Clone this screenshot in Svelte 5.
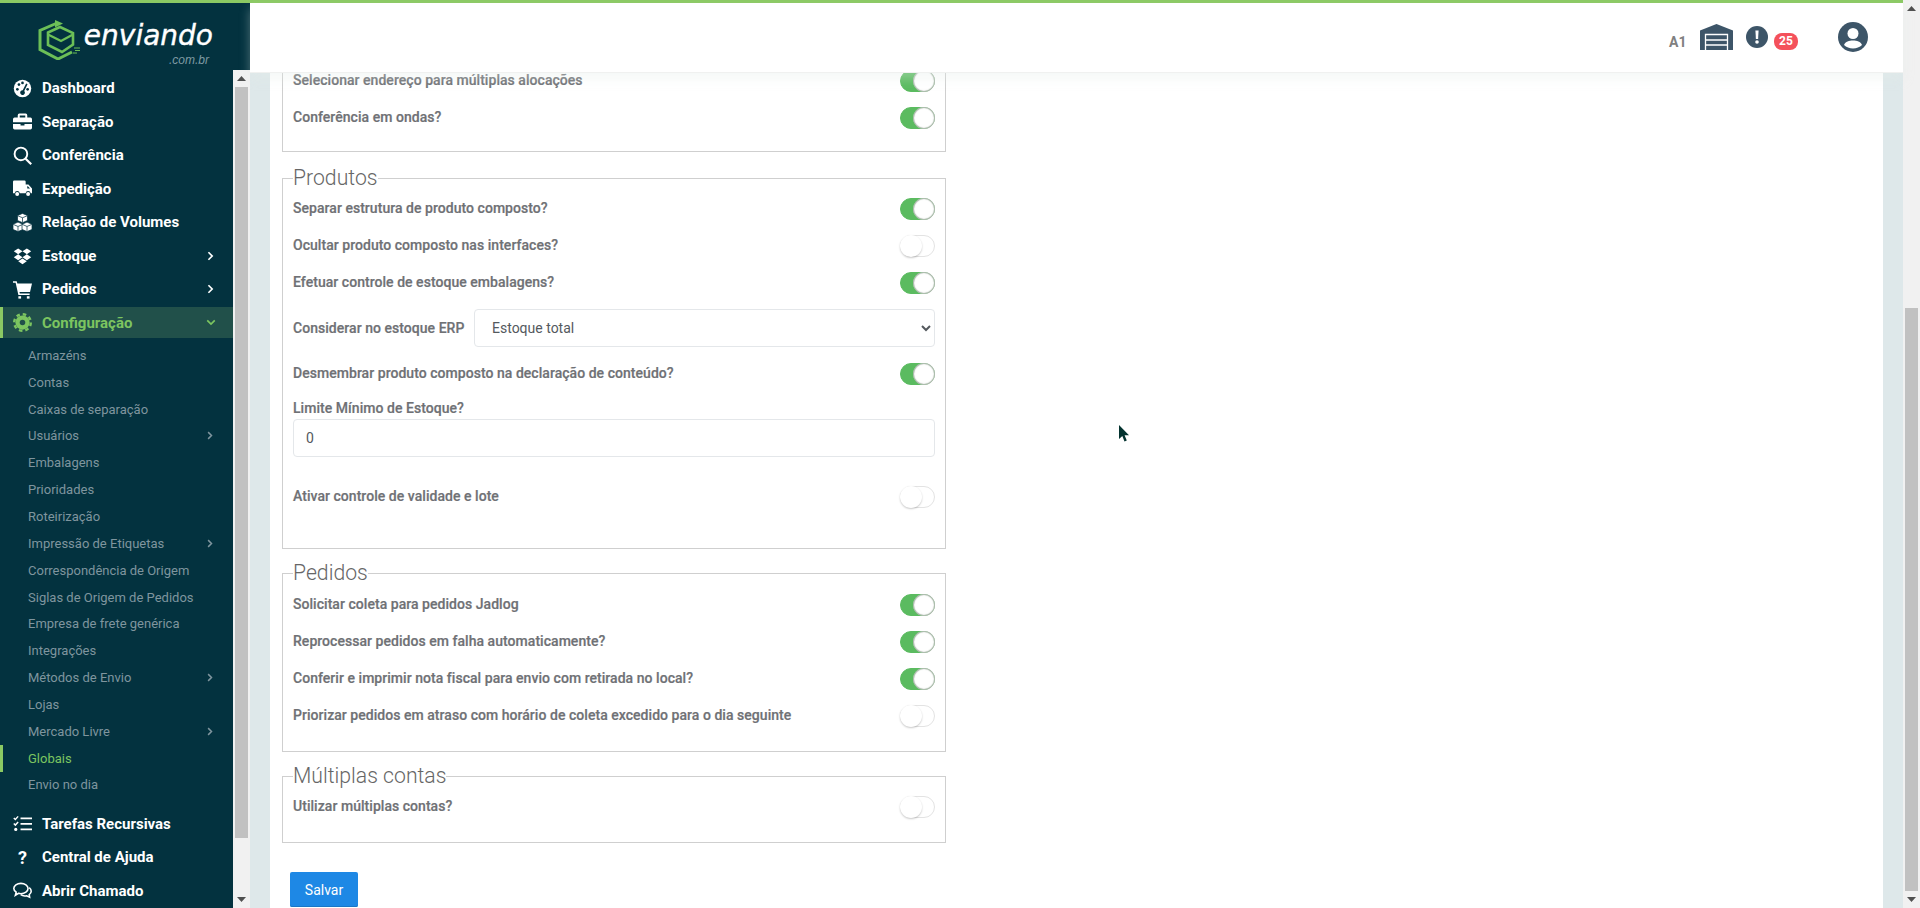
<script>
  const top1 = [
    { label: 'Dashboard', icon: 'gauge' },
    { label: 'Separação', icon: 'case' },
    { label: 'Conferência', icon: 'search' },
    { label: 'Expedição', icon: 'truck' },
    { label: 'Relação de Volumes', icon: 'cubes' },
    { label: 'Estoque', icon: 'dropbox', arrow: true },
    { label: 'Pedidos', icon: 'cart', arrow: true },
    { label: 'Configuração', icon: 'cog', open: true }
  ];
  const subs = [
    { label: 'Armazéns' }, { label: 'Contas' }, { label: 'Caixas de separação' },
    { label: 'Usuários', arrow: true }, { label: 'Embalagens' }, { label: 'Prioridades' },
    { label: 'Roteirização' }, { label: 'Impressão de Etiquetas', arrow: true },
    { label: 'Correspondência de Origem' }, { label: 'Siglas de Origem de Pedidos' },
    { label: 'Empresa de frete genérica' }, { label: 'Integrações' },
    { label: 'Métodos de Envio', arrow: true }, { label: 'Lojas' },
    { label: 'Mercado Livre', arrow: true }, { label: 'Globais', current: true }, { label: 'Envio no dia' }
  ];
  const top2 = [
    { label: 'Tarefas Recursivas', icon: 'tasks' },
    { label: 'Central de Ajuda', icon: 'help' },
    { label: 'Abrir Chamado', icon: 'chat' }
  ];
  const pedidos = [
    ['Solicitar coleta para pedidos Jadlog', true],
    ['Reprocessar pedidos em falha automaticamente?', true],
    ['Conferir e imprimir nota fiscal para envio com retirada no local?', true],
    ['Priorizar pedidos em atraso com horário de coleta excedido para o dia seguinte', false]
  ];
</script>

{#snippet icon(name)}
  <svg class="ico" viewBox="0 0 24 24" aria-hidden="true">
    {#if name === 'gauge'}
      <circle cx="12" cy="12" r="11" fill="currentColor" />
      <g fill="#03323f"><circle cx="5.500" cy="13" r="1.700" /><circle cx="7.500" cy="7" r="1.700" /><circle cx="12" cy="5" r="1.700" /><circle cx="18.500" cy="13" r="1.700" /><path d="M16.600 5.800l1.800.9-4.200 8.400a3 3 0 1 1-1.900-.9z" /></g>
    {:else if name === 'case'}
      <path fill="currentColor" d="M8 2h8a2 2 0 0 1 2 2v3h4a2 2 0 0 1 2 2v4H0V9a2 2 0 0 1 2-2h4V4a2 2 0 0 1 2-2zm.5 2.300V7h7V4.300zM0 15h9.500v2h5v-2H24v5a2 2 0 0 1-2 2H2a2 2 0 0 1-2-2z" />
    {:else if name === 'search'}
      <circle cx="10" cy="10" r="8" fill="none" stroke="currentColor" stroke-width="2.400" /><path d="M16 16l7 7" stroke="currentColor" stroke-width="2.800" />
    {:else if name === 'truck'}
      <path fill="currentColor" d="M1.500 2h13A1.500 1.500 0 0 1 16 3.500V7h3.500L24 12v6h-1.600a3.300 3.300 0 0 0-6.500 0H8.600a3.300 3.300 0 0 0-6.500 0H0V3.500A1.500 1.500 0 0 1 1.500 2zM18 9v3h3.500l-2.700-3z" />
      <circle cx="5.300" cy="19" r="2.500" fill="currentColor" /><circle cx="19.100" cy="19" r="2.500" fill="currentColor" />
    {:else if name === 'cubes'}
      <g fill="currentColor" stroke="#03323f" stroke-width=".9"><path d="M12 .5l6.300 2.700v6.300L12 12.200 5.700 9.500V3.200z" /><path d="M6.300 11.500l6.300 2.700v6.600L6.300 23.500 0 20.800v-6.600z" /><path d="M17.700 11.500L24 14.200v6.600l-6.300 2.700-6.300-2.700v-6.600z" /></g>
      <g fill="none" stroke="#03323f" stroke-width=".9"><path d="M6 3.500l6 2.500 6-2.500M12 6v6" /><path d="M.5 14.500l5.800 2.500 5.800-2.500M6.300 17v6" /><path d="M12 14.500l5.700 2.500 5.800-2.500M17.700 17v6" /></g>
    {:else if name === 'dropbox'}
      <path fill="currentColor" d="M6.500 3L12 6.700 6.500 10.500 1 6.700zM17.500 3L23 6.700l-5.500 3.800L12 6.700zM1 14.200l5.500-3.700L12 14.200 6.500 18zM23 14.200L17.500 18 12 14.200l5.500-3.700zM6.600 19.300L12 15.700l5.400 3.600-5.400 3.700z" />
    {:else if name === 'cart'}
      <path fill="currentColor" d="M0 1.500h4.700l.8 3H24l-2.500 10.500H8.200l.4 2H21v2H6.800L3.300 3.500H0z" /><rect x="6.800" y="20.500" width="3.400" height="3" fill="currentColor" /><rect x="17.500" y="20.500" width="3.400" height="3" fill="currentColor" />
    {:else if name === 'cog'}
      <circle cx="12" cy="12" r="9" fill="currentColor" /><circle cx="12" cy="12" r="10.500" fill="none" stroke="currentColor" stroke-width="3" stroke-dasharray="4.500 3.746" /><circle cx="12" cy="12" r="3.500" fill="#21504a" />
    {:else if name === 'tasks'}
      <g stroke="currentColor" fill="none" stroke-width="2.200"><path d="M9.500 5.500H24M9.500 12.500H24M9.500 19.500H24" /><path d="M1 5l2 2 3.500-4M1 12l2 2 3.500-4" stroke-width="1.800" /></g><circle cx="3.500" cy="19.500" r="2" fill="currentColor" />
    {:else if name === 'chat'}
      <g fill="none" stroke="currentColor" stroke-width="2"><path d="M10 3c5 0 9 3 9 6.500S15 16 10 16c-1 0-2-.1-3-.4L3 18l1-4C2.200 12.800 1 11.200 1 9.500 1 6 5 3 10 3z" /><path d="M20.500 8.500c1.600 1.200 2.500 2.800 2.500 4.500 0 1.700-1 3.200-2.500 4.200l.5 3.300-3.800-1.800c-2.800.6-5.500 0-7.400-1.400" /></g>
    {/if}
  </svg>
{/snippet}

{#snippet chev()}
  <svg class="chev" viewBox="0 0 8 12" aria-hidden="true"><path d="M1.500 1.500L6 6l-4.500 4.500" fill="none" stroke="currentColor" stroke-width="2" /></svg>
{/snippet}

{#snippet vbar(cls)}
  <div class="vbar {cls}">
    <svg class="arrow" viewBox="0 0 9 5" aria-hidden="true"><path d="M0 5L4.500 0 9 5z" /></svg>
    <div class="vtrack"><div class="thumb"></div></div>
    <svg class="arrow" viewBox="0 0 9 5" aria-hidden="true"><path d="M0 0L4.500 5 9 0z" /></svg>
  </div>
{/snippet}

{#snippet toggle(on)}
  <span class="sw" class:on><span class="knob"></span></span>
{/snippet}

{#snippet row(text, on)}
  <div class="row"><label>{text}</label>{@render toggle(on)}</div>
{/snippet}

<div class="root">
  <div class="main">
    <div class="accent"></div>
    <div class="shell">
      <aside class="side">
        <div class="brand">
          <svg class="mark" viewBox="0 0 42 40" aria-hidden="true">
            <g fill="none" stroke="#6cbf57">
              <path d="M18 3.500L2 10.500v19L20 39l14-7" stroke-width="3" />
              <path d="M10 12.500L22 7l13 6v11.500L24 32 10 25z" stroke-width="2.600" />
              <path d="M10 14.500l13 6.500 12-6.500" stroke-width="2.400" />
              <path d="M36 28h6M37 30.500h5M35 33h4" stroke-width="1" />
            </g>
            <path d="M17 0l8 3.500-8 4z" fill="#6cbf57" />
          </svg>
          <div class="brandtext"><span class="bn">enviando</span><span class="bc">.com.br</span></div>
        </div>
        <div class="navwrap">
          <nav class="nav">
            {#each top1 as it}
              <div class="top" class:open={it.open}>
                <span class="tic">{@render icon(it.icon)}</span>
                <span class="tl">{it.label}</span>
                {#if it.arrow}{@render chev()}{/if}
                {#if it.open}<svg class="chev down" viewBox="0 0 12 8" aria-hidden="true"><path d="M1.500 1.500L6 6l4.500-4.500" fill="none" stroke="currentColor" stroke-width="2" /></svg>{/if}
              </div>
            {/each}
            <div class="sublist">
              {#each subs as s}
                <div class="sub" class:current={s.current}>
                  <span>{s.label}</span>
                  {#if s.arrow}{@render chev()}{/if}
                </div>
              {/each}
            </div>
            {#each top2 as it}
              <div class="top">
                <span class="tic">
                  {#if it.icon === 'help'}<span class="q">?</span>{:else}{@render icon(it.icon)}{/if}
                </span>
                <span class="tl">{it.label}</span>
              </div>
            {/each}
          </nav>
          {@render vbar('sidebar')}
        </div>
      </aside>

      <div class="content">
        <header class="head">
          <span class="a1">A1</span>
          <svg class="wh" viewBox="0 0 33 26" aria-hidden="true">
            <path fill="#3d5568" d="M16.500 0L33 6.500V26H0V6.500z" />
            <g fill="none" stroke="#fff" stroke-width="1.300"><path d="M5.500 27V10.500h22V27" /><path d="M5.500 16h22M5.500 21h22" /></g>
          </svg>
          <svg class="alert" viewBox="0 0 22 22" aria-hidden="true">
            <circle cx="11" cy="11" r="11" fill="#3d5568" />
            <path fill="#fff" d="M9.400 4.500h3.200l-.5 8.500h-2.200z" /><circle cx="11" cy="16" r="1.800" fill="#fff" />
          </svg>
          <span class="badge">25</span>
          <svg class="user" viewBox="0 0 30 30" aria-hidden="true">
            <circle cx="15" cy="15" r="15" fill="#3d5568" />
            <circle cx="15" cy="11.500" r="5.500" fill="#fff" />
            <path fill="#fff" d="M6 23c1.500-3.500 5-4.500 9-4.500s7.500 1 9 4.500c-2.300 2.300-5.500 3.500-9 3.500S8.300 25.300 6 23z" />
          </svg>
        </header>

        <div class="stage">
          <main class="card">
            <fieldset class="fs clipped">
              {@render row('Selecionar endereço para múltiplas alocações', true)}
              {@render row('Conferência em ondas?', true)}
            </fieldset>

            <fieldset class="fs produtos">
              <legend>Produtos</legend>
              {@render row('Separar estrutura de produto composto?', true)}
              {@render row('Ocultar produto composto nas interfaces?', false)}
              {@render row('Efetuar controle de estoque embalagens?', true)}
              <div class="selrow">
                <label>Considerar no estoque ERP</label>
                <select class="ctl"><option>Estoque total</option></select>
              </div>
              {@render row('Desmembrar produto composto na declaração de conteúdo?', true)}
              <div class="field">
                <label>Limite Mínimo de Estoque?</label>
                <input class="ctl" value="0" />
              </div>
              {@render row('Ativar controle de validade e lote', false)}
            </fieldset>

            <fieldset class="fs pedidos">
              <legend>Pedidos</legend>
              {#each pedidos as p}{@render row(p[0], p[1])}{/each}
            </fieldset>

            <fieldset class="fs multi">
              <legend>Múltiplas contas</legend>
              {@render row('Utilizar múltiplas contas?', false)}
            </fieldset>

            <button class="save">Salvar</button>
          </main>
        </div>
      </div>
    </div>
  </div>
  {@render vbar('page')}
  <svg class="cursor" viewBox="0 0 11 17" aria-hidden="true"><path d="M0 0v14l3.300-3 2.200 5.500 2.300-1-2.200-5.200H10z" fill="#04332f" /></svg>
</div>

<style>
  :global(body) { margin: 0; font-family: Roboto, "Liberation Sans", sans-serif; overflow: hidden; }
  .root { position: relative; display: flex; width: 1920px; height: 908px; overflow: hidden; background: #fff; }
  .main { flex: 1; min-width: 0; display: flex; flex-direction: column; }
  .accent { height: 3px; background: #8bc963; flex: none; }
  .shell { flex: 1; min-height: 0; display: flex; }

  .side { width: 250px; flex: none; display: flex; flex-direction: column; background: #03323f; }
  .brand { height: 67px; flex: none; display: flex; padding: 17px 0 0 38px; box-sizing: border-box; gap: 3px; }
  .mark { width: 42px; height: 40px; flex: none; }
  .brandtext { display: flex; flex-direction: column; align-items: flex-end; width: 130px; }
  .bn { font: oblique 400 28px/30px "DejaVu Sans", sans-serif; color: #fff; margin-top: 1px; -webkit-text-stroke: .4px #fff; }
  .bc { font: italic 400 12px/12px "Liberation Sans", sans-serif; color: #7f9aa3; margin: 3px 4px 0 0; }
  .navwrap { flex: 1; min-height: 0; display: flex; }
  .nav { flex: 1; min-width: 0; padding-top: 2.500px; overflow: hidden; }

  .top { position: relative; display: flex; align-items: center; height: 31px; margin-bottom: 2.500px; color: #fff; font-size: 15px; font-weight: 700; }
  .top.open { background: #21504a; color: #7cc560; box-shadow: inset 3px 0 0 #8bc963; }
  .tic { width: 42px; flex: none; display: flex; justify-content: center; padding-left: 3px; box-sizing: border-box; }
  .ico { width: 19px; height: 19px; display: block; }
  .q { font-size: 18px; font-weight: 700; line-height: 19px; }
  .tl { flex: 1; }
  .chev { width: 7px; height: 10px; margin-right: 19px; flex: none; }
  .down { width: 10px; height: 7px; margin-right: 17px; }

  .sublist { margin-top: 4px; margin-bottom: 10px; }
  .sub { display: flex; align-items: center; justify-content: space-between; height: 26.850px; padding-left: 28px; color: #7f959e; font-size: 13px; }
  .sub .chev { width: 6px; height: 9px; margin-right: 20px; }
  .sub.current { color: #7cc560; box-shadow: inset 3px 0 0 #8bc963; }

  .vbar { width: 17px; flex: none; background: #f1f1f1; display: flex; flex-direction: column; align-items: center; }
  .arrow { width: 9px; height: 5px; margin: 6px 0; flex: none; fill: #505050; }
  .vtrack { flex: 1; min-height: 0; width: 100%; display: flex; flex-direction: column; }
  .thumb { margin: 0 2px; background: #c1c1c1; }
  .sidebar .vtrack { justify-content: flex-start; }
  .sidebar .thumb { height: 751px; }
  .page .vtrack { justify-content: flex-end; }
  .page .thumb { height: 583px; }

  .content { flex: 1; min-width: 0; display: flex; flex-direction: column; }
  .head { height: 70px; flex: none; background: #fff; border-bottom: 1px solid #f0f1f0; box-sizing: border-box; display: flex; align-items: flex-start; z-index: 1; padding-left: 1419px; box-shadow: 0 6px 10px rgba(225, 235, 232, .35); }
  .a1 { font-size: 14px; font-weight: 700; color: #808080; margin-top: 31px; width: 31px; }
  .wh { width: 33px; height: 26px; margin-top: 21px; flex: none; }
  .alert { width: 22px; height: 22px; margin: 23px 0 0 13px; flex: none; }
  .badge { width: 24px; height: 17px; margin: 30px 0 0 6px; border-radius: 8px; background: #f4515b; color: #fff; font-size: 12px; font-weight: 700; line-height: 17px; text-align: center; flex: none; }
  .user { width: 30px; height: 30px; margin: 19px 0 0 40px; flex: none; }

  .stage { flex: 1; min-height: 0; background: #dee8ea; padding: 0 20px; overflow: hidden; }
  .card { background: #fff; height: 100%; padding: 0 0 0 12px; box-sizing: border-box; overflow: hidden; }

  .fs { width: 664px; box-sizing: border-box; margin: 0 0 12px; padding: 0 10px; border: 1px solid #cfcfcf; min-width: 0; }
  legend { padding: 0; font-size: 21.200px; line-height: 23px; font-weight: 300; color: #666; }
  .clipped { border-top: 0; margin-top: -12px; margin-bottom: 15px; padding-bottom: 16px; }
  .produtos { padding-bottom: 34px; }
  .produtos legend { line-height: 22px; }
  .pedidos { padding-bottom: 18px; margin-bottom: 13px; }
  .pedidos legend { line-height: 24px; }
  .multi { padding-bottom: 18px; margin-bottom: 29px; }
  .multi legend { line-height: 22px; }

  .row { display: flex; align-items: center; justify-content: space-between; height: 37px; }
  label { font-size: 14px; font-weight: 500; color: #6f7175; -webkit-text-stroke: .2px #6f7175; letter-spacing: .04px; }
  .sw { position: relative; width: 35px; height: 22px; box-sizing: border-box; border: 1px solid #e3e3e3; border-radius: 11px; background: #fff; display: block; flex: none; margin-top: 2px; }
  .sw.on { background: #5bbb60; border-color: #5bbb60; }
  .knob { position: absolute; left: -1px; top: -1px; width: 22px; height: 22px; box-sizing: border-box; border-radius: 50%; background: #fff; box-shadow: 0 1px 2px rgba(0, 0, 0, .22); }
  .on .knob { left: 12px; box-shadow: 0 0 1px 1px rgba(60, 90, 60, .45) inset; }

  .selrow { display: flex; align-items: center; justify-content: space-between; height: 38px; margin: 9px 0 7px; }
  .ctl { box-sizing: border-box; height: 38px; border: 1px solid #e4e7ea; border-radius: 4px; background: #fff; color: #54595e; font: 400 14px Roboto, sans-serif; outline: none; }
  select.ctl { width: 461px; padding: 0 13px; }
  input.ctl { width: 642px; padding: 0 12px; display: block; }
  .field { display: flex; flex-direction: column; padding-top: 7px; }
  .field label { line-height: 20px; margin-bottom: 1px; }
  .field + .row { margin-top: 20px; }

  .save { display: block; width: 68px; height: 35px; margin: 0 0 0 8px; border: 0; border-radius: 2px; background: #1e88e5; color: #fff; font: 400 14px Roboto, sans-serif; box-shadow: inset 0 -1px 0 #1a76c6; }

  .cursor { position: absolute; left: 1119px; top: 425px; width: 11px; height: 17px; }
</style>
